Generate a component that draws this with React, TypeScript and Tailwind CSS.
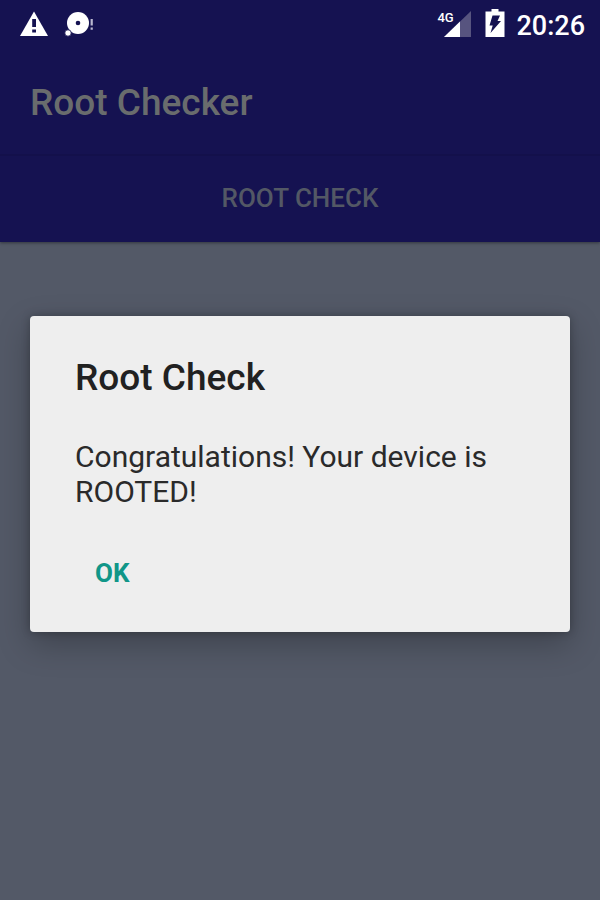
import React, { useState } from 'react';

const WarningIcon = () => (
  <svg viewBox="0 0 28 26" className="w-7 h-[26px]" fill="none" aria-hidden="true">
    <path d="M14 0.5 28 25H0Z" fill="#fff" />
    <path d="M12.2 8h3.8v8h-3.8zM12.2 18.5h3.8v3h-3.8z" fill="#151251" />
  </svg>
);

const DiscIcon = () => (
  <svg viewBox="0 0 30 26" className="w-[30px] h-[26px]" aria-hidden="true">
    <circle cx="14" cy="12" r="11" fill="#fff" />
    <circle cx="14" cy="12" r="2.3" fill="#151251" />
    <circle cx="4" cy="22" r="3.2" fill="#fff" stroke="#151251" strokeWidth="0.8" />
    <path d="M26.6 8h2.2v6.5h-2.2zM26.6 16.5h2.2v2.2h-2.2z" fill="#b9b8d0" />
  </svg>
);

const SignalIcon = () => (
  <svg viewBox="0 0 27 26" className="w-[27px] h-[26px]" aria-hidden="true">
    <path d="M27 0v26H0Z" fill="#57547f" />
    <path d="M16 10.6V26H0Z" fill="#fff" />
  </svg>
);

const BatteryIcon = () => (
  <svg viewBox="0 0 20 28" className="w-5 h-7" aria-hidden="true">
    <path d="M6.5 0h7v2.5h6V28H0.5V2.5h6Z" fill="#fff" />
    <path d="M7.5 6.5h7.5l-2.5 5.5h3.5L5.5 24l2.2-7.5H4.5Z" fill="#151251" />
  </svg>
);

const StatusBar = () => (
  <div className="flex h-12 items-center justify-between pl-5 pr-[15px] text-white">
    <div className="flex items-center gap-4">
      <WarningIcon />
      <DiscIcon />
    </div>
    <div className="flex items-center">
      <div className="relative pl-[7px]">
        <span className="absolute left-0 top-0 text-[13px] leading-[13px] font-medium">4G</span>
        <SignalIcon />
      </div>
      <div className="ml-[14px] mr-[11px] pb-0.5">
        <BatteryIcon />
      </div>
      <span className="pt-[3px] text-[27px] leading-8 font-medium">20:26</span>
    </div>
  </div>
);

const App = () => {
  const [open, setOpen] = useState(true);

  return (
    <div className="relative flex min-h-screen flex-col bg-[#535967] font-['Roboto','Liberation_Sans',sans-serif]">
      <header className="bg-[#151251] shadow-[0_1px_3px_rgba(0,0,0,0.4)]">
        <StatusBar />
        <div className="flex h-[106px] items-center px-[30px] pt-1">
          <h1 className="text-[37px] leading-[44px] font-medium text-[#696c6d]">Root Checker</h1>
        </div>
        <nav className="border-t-2 border-[#13104b]">
          <button
            type="button"
            className="h-[86px] w-full pb-0.5 text-[26px] font-medium text-[#535865]"
            onClick={() => setOpen(true)}
          >
            ROOT CHECK
          </button>
        </nav>
      </header>

      {/* Dialog */}
      {open && (
        <div className="absolute inset-0 flex items-center justify-center px-[30px] pt-12">
          <div
            role="alertdialog"
            aria-labelledby="dialog-title"
            aria-describedby="dialog-message"
            className="w-full rounded-[4px] bg-[#eeeeee] px-[45px] pt-10 pb-6 shadow-[0_12px_32px_rgba(0,0,0,0.25),0_0_8px_rgba(0,0,0,0.25)]"
          >
            <h2 id="dialog-title" className="text-[37px] leading-[44px] font-medium text-[#212121]">
              Root Check
            </h2>
            <p id="dialog-message" className="mt-[39px] text-[30px] leading-[35px] text-[#2a2a2a]">
              Congratulations! Your device is ROOTED!
            </p>
            <button
              type="button"
              className="mt-[30px] h-[69px] px-5 text-[26px] font-bold text-[#109688]"
              onClick={() => setOpen(false)}
            >
              OK
            </button>
          </div>
        </div>
      )}
    </div>
  );
};

export default App;
